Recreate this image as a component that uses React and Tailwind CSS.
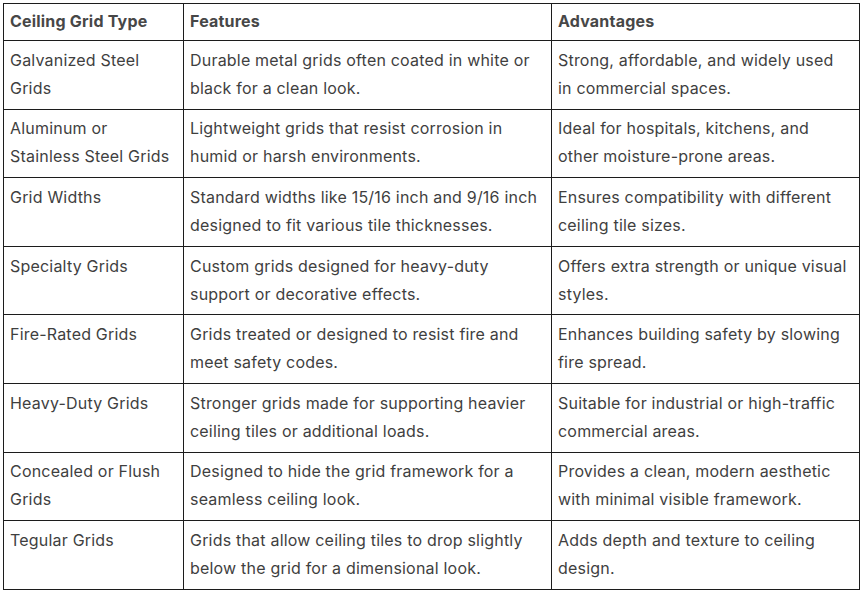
const rows = [
  {
    type: ['Galvanized Steel', 'Grids'],
    features: ['Durable metal grids often coated in white or', 'black for a clean look.'],
    advantages: ['Strong, affordable, and widely used', 'in commercial spaces.'],
  },
  {
    type: ['Aluminum or', 'Stainless Steel Grids'],
    features: ['Lightweight grids that resist corrosion in', 'humid or harsh environments.'],
    advantages: ['Ideal for hospitals, kitchens, and', 'other moisture-prone areas.'],
  },
  {
    type: ['Grid Widths'],
    features: ['Standard widths like 15/16 inch and 9/16 inch', 'designed to fit various tile thicknesses.'],
    advantages: ['Ensures compatibility with different', 'ceiling tile sizes.'],
  },
  {
    type: ['Specialty Grids'],
    features: ['Custom grids designed for heavy-duty', 'support or decorative effects.'],
    advantages: ['Offers extra strength or unique visual', 'styles.'],
  },
  {
    type: ['Fire-Rated Grids'],
    features: ['Grids treated or designed to resist fire and', 'meet safety codes.'],
    advantages: ['Enhances building safety by slowing', 'fire spread.'],
  },
  {
    type: ['Heavy-Duty Grids'],
    features: ['Stronger grids made for supporting heavier', 'ceiling tiles or additional loads.'],
    advantages: ['Suitable for industrial or high-traffic', 'commercial areas.'],
  },
  {
    type: ['Concealed or Flush', 'Grids'],
    features: ['Designed to hide the grid framework for a', 'seamless ceiling look.'],
    advantages: ['Provides a clean, modern aesthetic', 'with minimal visible framework.'],
  },
  {
    type: ['Tegular Grids'],
    features: ['Grids that allow ceiling tiles to drop slightly', 'below the grid for a dimensional look.'],
    advantages: ['Adds depth and texture to ceiling', 'design.'],
  },
];

function Lines({ lines }) {
  return lines.map((line, i) => (
    <span key={i} className="block whitespace-nowrap">
      {line}
    </span>
  ));
}

export default function App() {
  return (
    <div className="min-h-screen bg-white pl-[3px] pt-[3px] font-['Inter','Liberation_Sans',sans-serif]">
      <table className="table-fixed border-collapse w-[857px] text-[16px] tracking-[0.2px] text-[#3f3f3f]">
        <colgroup>
          <col className="w-[180px]" />
          <col className="w-[368px]" />
          <col className="w-[308px]" />
        </colgroup>
        <thead>
          <tr>
            {['Ceiling Grid Type', 'Features', 'Advantages'].map((h) => (
              <th
                key={h}
                className="border border-[#1c1c1c] px-[6px] pt-[3px] pb-[5px] text-left align-top font-bold leading-[28px] text-[#474747]"
              >
                {h}
              </th>
            ))}
          </tr>
        </thead>
        <tbody>
          {rows.map((r) => (
            <tr key={r.type.join(' ')}>
              {[r.type, r.features, r.advantages].map((cell, i) => (
                <td
                  key={i}
                  className="border border-[#1c1c1c] px-[6px] pt-[4.8px] pb-[6.8px] align-top leading-[28px]"
                >
                  <Lines lines={cell} />
                </td>
              ))}
            </tr>
          ))}
        </tbody>
      </table>
    </div>
  );
}
